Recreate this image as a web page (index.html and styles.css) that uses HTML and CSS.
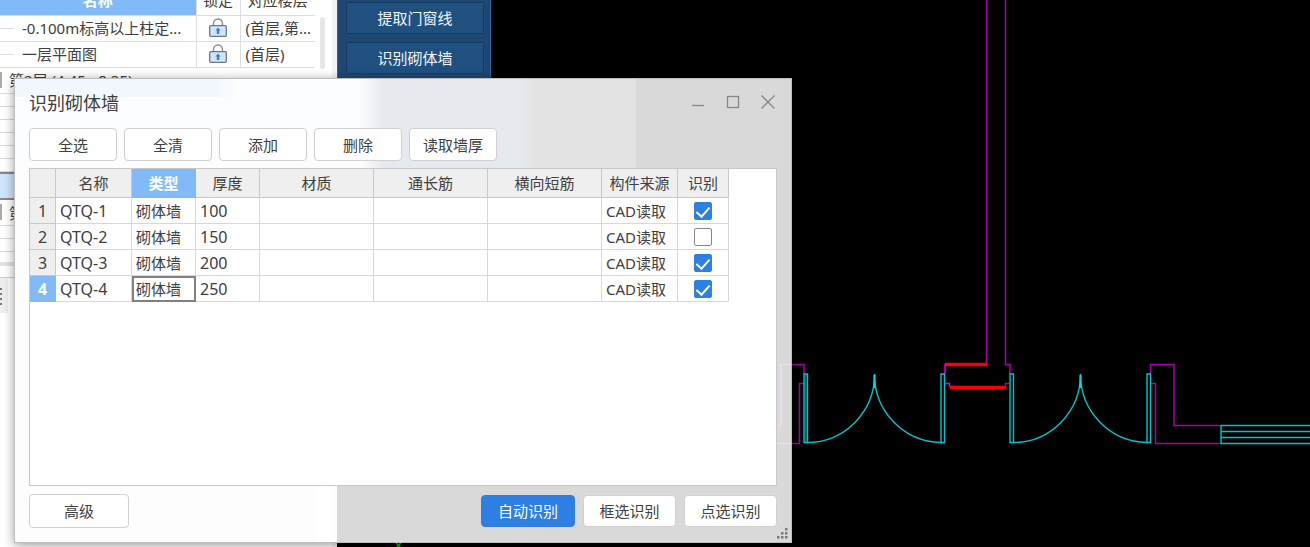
FILE: index.html
```html
<!DOCTYPE html>
<html lang="zh-CN">
<head>
<meta charset="utf-8">
<title>识别砌体墙</title>
<link rel="stylesheet" href="styles.css">
</head>
<body>
<svg class="defs" width="0" height="0" aria-hidden="true">
  <symbol id="lock" viewBox="0 0 20 20">
    <path d="M5.5 8V5.500a4.500 4.500 0 0 1 9 0V8" fill="none" stroke="#858b99" stroke-width="1.4"/>
    <rect x="1.700" y="7.700" width="16.600" height="10.600" rx="1" fill="#d3e4fb" stroke="#6d7689" stroke-width="1.3"/>
    <path d="M10 9.600l2.600 3h-1.400v3.400H8.800v-3.400H7.400z" fill="#2f80ed"/>
  </symbol>
</svg>
<div class="app">
  <aside class="drawings">
    <table class="drawing-list">
      <colgroup><col><col class="col-lock"><col class="col-floor"></colgroup>
      <thead>
        <tr><th class="active"><span>名称</span></th><th><span>锁定</span></th><th><span>对应楼层</span></th></tr>
      </thead>
      <tbody>
        <tr><td class="leaf">-0.100m标高以上柱定...</td><td class="lock"><svg><use href="#lock"/></svg></td><td>(首层,第...</td></tr>
        <tr><td class="leaf">一层平面图</td><td class="lock"><svg><use href="#lock"/></svg></td><td>(首层)</td></tr>
        <tr><td class="group" colspan="3">第2层 (4.45~ 8.35)</td></tr>
      </tbody>
    </table>
    <div class="stub"></div><div class="stub"></div><div class="stub"></div>
    <div class="stub"></div><div class="stub"></div><div class="stub"></div>
    <div class="stub-selected"></div>
    <div class="group stub-group">第</div>
    <div class="stub"></div><div class="stub"></div>
    <div class="stub-scroll"></div>
    <div class="panel-head"><span class="grip"></span></div>
    <span class="scroll-thumb"></span>
  </aside>
  <main class="canvas">
    <svg class="drawing" aria-label="CAD">
      <g transform="translate(-337 0)" fill="none">
        <g stroke="#a800a8" stroke-width="1.5">
          <path d="M776 425.500H781V364.500H804V374M804 383.500H799.500V443.500H776"/>
          <path d="M986.500 0V364M1005.500 0V364.500H1010V374M1010 383.500H1005.500V388"/>
          <path d="M1150.500 374V364.500H1174V425.500H1220M1150.500 383.500H1155.500V443.500H1220"/>
        </g>
        <path d="M945 374V364M945 383.500H949.500V387" stroke="#e000e0" stroke-width="1.5"/>
        <path d="M945 364.500H987M950 387.500H1005.500" stroke="#ff0000" stroke-width="3.400"/>
        <g stroke="#00c4c8" stroke-width="1.4">
          <path d="M804 374H807.500V442.500H804Z" fill="#004c50"/>
          <path d="M941 374H944.500V442.500H941ZM1010 374H1013.500V442.500H1010ZM1147 374H1150.500V442.500H1147Z"/>
          <path d="M807 442.500A67.500 68 0 0 0 874.500 374A67.500 68 0 0 0 941 442.500"/>
          <path d="M1013 442.500A67.500 68 0 0 0 1080.500 374A67.500 68 0 0 0 1147 442.500"/>
          <path d="M3000 425.500H1221V443.500H3000M1221 431.500H3000M1221 437.500H3000"/>
        </g>
        <path d="M874.500 375V388M1080.500 375V388" stroke="#00d8dc" stroke-width="2"/>
        <path d="M395 540.500l3.500 6 3.500-6" stroke="#00d000" stroke-width="1.500"/>
      </g>
    </svg>
    <div class="commands">
      <button type="button">提取门窗线</button>
      <button type="button">识别砌体墙</button>
    </div>
  </main>

  <section class="dialog" role="dialog" aria-labelledby="dialog-title">
    <header class="title-bar">
      <h1 id="dialog-title">识别砌体墙</h1>
      <div class="window-controls">
        <button type="button" aria-label="最小化"><svg viewBox="0 0 14 14"><path d="M1 10.500H13"/></svg></button>
        <button type="button" aria-label="最大化"><svg viewBox="0 0 14 14"><rect x="1.500" y="1.500" width="11" height="11"/></svg></button>
        <button type="button" aria-label="关闭"><svg viewBox="0 0 14 14"><path d="M.5.5L13.500 13.500M13.500.5L.5 13.500"/></svg></button>
      </div>
    </header>
    <div class="toolbar">
      <button type="button" class="btn">全选</button>
      <button type="button" class="btn">全清</button>
      <button type="button" class="btn">添加</button>
      <button type="button" class="btn">删除</button>
      <button type="button" class="btn">读取墙厚</button>
    </div>
    <div class="grid-frame">
      <table class="walls">
        <colgroup>
          <col class="w-index"><col class="w-name"><col class="w-type"><col class="w-thick"><col class="w-wide"><col class="w-wide"><col class="w-wide"><col class="w-source"><col class="w-check">
        </colgroup>
        <thead>
          <tr><th></th><th>名称</th><th class="active">类型</th><th>厚度</th><th>材质</th><th>通长筋</th><th>横向短筋</th><th>构件来源</th><th>识别</th></tr>
        </thead>
        <tbody>
          <tr><th>1</th><td class="latin">QTQ-1</td><td>砌体墙</td><td class="latin">100</td><td></td><td></td><td></td><td>CAD读取</td><td class="check"><input type="checkbox" aria-label="识别 QTQ-1" checked></td></tr>
          <tr><th>2</th><td class="latin">QTQ-2</td><td>砌体墙</td><td class="latin">150</td><td></td><td></td><td></td><td>CAD读取</td><td class="check"><input type="checkbox" aria-label="识别 QTQ-2"></td></tr>
          <tr><th>3</th><td class="latin">QTQ-3</td><td>砌体墙</td><td class="latin">200</td><td></td><td></td><td></td><td>CAD读取</td><td class="check"><input type="checkbox" aria-label="识别 QTQ-3" checked></td></tr>
          <tr><th class="active">4</th><td class="latin">QTQ-4</td><td class="current">砌体墙</td><td class="latin">250</td><td></td><td></td><td></td><td>CAD读取</td><td class="check"><input type="checkbox" aria-label="识别 QTQ-4" checked></td></tr>
        </tbody>
      </table>
    </div>
    <footer class="actions">
      <button type="button" class="btn advanced">高级</button>
      <button type="button" class="btn primary">自动识别</button>
      <button type="button" class="btn">框选识别</button>
      <button type="button" class="btn">点选识别</button>
    </footer>
    <svg class="resize" viewBox="0 0 11 11" aria-hidden="true"><path d="M8 0h2.500v2.500h-2.500zM4 4h2.500v2.500h-2.500zM8 4h2.500v2.500h-2.500zM0 8h2.500v2.500h-2.500zM4 8h2.500v2.500h-2.500zM8 8h2.500v2.500h-2.500z" fill="#777b80"/></svg>
  </section>
</div>
</body>
</html>
```
FILE: styles.css
```css
* { box-sizing: border-box; }

body {
  margin: 0;
  font: 15px/20px "Noto Sans", "Noto Sans CJK SC", sans-serif;
  color: #404040;
}

button { font: inherit; color: inherit; padding: 0; }
table { border-collapse: collapse; table-layout: fixed; }
.defs { display: block; }

.app {
  position: relative;
  display: flex;
  min-height: 100vh;
  overflow: hidden;
}

/* Drawing list */
.drawings {
  position: relative;
  flex: none;
  width: 337px;
  height: 100vh;
  overflow: hidden;
  background: #fff;
  border-right: 5px solid #f4f4f4;
}

.drawing-list { width: 315px; }
.col-lock { width: 44px; }
.col-floor { width: 75px; }

.drawing-list th {
  height: 15px;
  padding: 0;
  font-weight: 400;
  border-right: 1px solid #ddd;
  border-bottom: 1px solid #ddd;
}
.drawing-list th:last-child { border-right: 0; }
.drawing-list th span {
  display: flex;
  align-items: flex-end;
  justify-content: center;
  height: 14px;
  padding-bottom: 4px;
}
.drawing-list .active { background: #82baf9; color: #fff; font-weight: 700; }
.drawing-list td {
  height: 26px;
  padding: 0 0 0 5px;
  border-right: 1px solid #ddd;
  border-bottom: 1px solid #ddd;
  white-space: nowrap;
}
.drawing-list td:last-child { border-right: 0; }
.drawing-list td.leaf {
  padding-left: 22px;
  background: linear-gradient(#ddd, #ddd) 0 center / 14px 1px no-repeat;
}
.drawing-list td.lock { padding: 0; text-align: center; }
.lock svg { display: block; width: 20px; height: 20px; margin: 0 auto; }
.drawing-list td.group, .group {
  padding-left: 9px;
  background: linear-gradient(#aaa, #aaa) 0 center / 2px 16px no-repeat;
}

.stub { height: 13px; border-bottom: 1px solid #d8d8d8; }
.stub-selected { height: 28px; background: #cfe5fd; border: solid #888; border-width: 2px 0; }
.stub-group { height: 26px; line-height: 26px; border-bottom: 1px solid #d8d8d8; }
.stub-scroll { height: 26px; border-bottom: 1px solid #ccc; background: linear-gradient(#e4e4e4, #e4e4e4) 0 10px / 100% 4px no-repeat; }
.panel-head { width: 8px; height: 35px; padding-top: 10px; background: #eee; }
.grip { display: block; width: 2px; height: 18px; background: repeating-linear-gradient(#777 0 2px, transparent 2px 5px); }
.scroll-thumb { position: absolute; top: 17px; right: 7px; width: 5px; height: 52px; border-radius: 3px; background: #e6e6e6; }

/* CAD canvas */
.canvas { position: relative; flex: 1; min-width: 0; background: #000; }
.drawing { position: absolute; inset: 0; width: 100%; height: 100%; }

.commands {
  position: relative;
  display: flex;
  flex-direction: column;
  gap: 8px;
  width: 154px;
  height: 79px;
  padding: 2px 6px 0 8px;
  background: #1d4873;
  border: solid #2b659b;
  border-width: 0 1px;
}
.commands button {
  flex: none;
  height: 32px;
  color: #f2f6fa;
  background: #205080;
  border: 1px solid #173a60;
}

/* Dialog */
.dialog {
  position: absolute;
  z-index: 1;
  inset: 78px 518px 4px 14px;
  display: flex;
  flex-direction: column;
  padding: 0 14px;
  background: linear-gradient(#fdfdfd, #fdfdfd) 0 0 / 300px 100% no-repeat rgba(255, 255, 255, .85);
  border: 1px solid #bdbdbd;
  box-shadow: 0 2px 10px rgba(0, 0, 0, .4);
}
.dialog::before {
  content: "";
  position: absolute;
  z-index: -1;
  top: 0;
  left: 0;
  width: 621px;
  height: 89px;
  background:
    linear-gradient(90deg, #f2f7fe 0 200px, transparent 225px) 0 0 / 100% 18px no-repeat,
    linear-gradient(90deg, #fcfdfe 0 345px, #e6eaef 367px 500px, #e3e3e3 522px);
}

.title-bar { display: flex; justify-content: space-between; height: 49px; padding-top: 11px; }
.title-bar h1 { margin: 0; font-size: 18px; font-weight: 400; line-height: 26px; }
.window-controls { display: flex; gap: 21px; padding: 5px 2px 0 0; }
.window-controls button { width: 14px; height: 14px; border: 0; background: none; }
.window-controls svg { display: block; width: 14px; height: 14px; fill: none; stroke: #888; stroke-width: 1.3; }

.toolbar { display: flex; gap: 7px; margin-bottom: 7px; }
.btn {
  width: 88px;
  height: 33px;
  background: #fff;
  border: 1px solid #d0d0d0;
  border-radius: 4px;
}

.grid-frame { flex: 1; min-height: 0; overflow: hidden; background: #fff; border: 1px solid #c8c8c8; }
.walls { width: 699px; margin: -1px 0 0 -1px; }
.w-index { width: 26px; }
.w-name { width: 76px; }
.w-type { width: 64px; }
.w-thick { width: 64px; }
.w-wide { width: 114px; }
.w-source { width: 76px; }
.w-check { width: 51px; }
.walls th, .walls td { border: 1px solid #d8d8d8; white-space: nowrap; }
.walls th { padding: 0; font-weight: 400; background: #efefef; border-color: #c8c8c8; }
.walls thead th { height: 29px; }
.walls td { height: 26px; padding: 0 4px; }
.walls tbody th, .walls .latin { font-size: 16px; }
.walls th.active { color: #fff; font-weight: 700; background: #82baf9; border-color: #82baf9; }
.walls td.current { outline: 2px solid #808080; outline-offset: -2px; }
.walls td.check { padding: 0; text-align: center; }
.check input {
  display: block;
  appearance: none;
  width: 18px;
  height: 18px;
  margin: 0 auto;
  background: #fff;
  border: 1px solid #888;
  border-radius: 2px;
}
.check input:checked { background: #2d7fe3; border-color: #2d7fe3; }
.check input:checked::before {
  content: "";
  display: block;
  width: 6px;
  height: 11px;
  margin: 1px auto 0;
  border: solid #fff;
  border-width: 0 2px 2px 0;
  transform: rotate(42deg);
}

.actions { display: flex; align-items: center; gap: 8px; padding: 8px 0 14px; }
.actions .btn { width: 93px; height: 32px; }
.actions .advanced { width: 100px; height: 34px; margin-right: auto; }
.actions .primary { width: 94px; color: #fff; background: #2d7fe3; border-color: #2d7fe3; }
.resize { position: absolute; right: 3px; bottom: 3px; width: 11px; height: 11px; }
```
